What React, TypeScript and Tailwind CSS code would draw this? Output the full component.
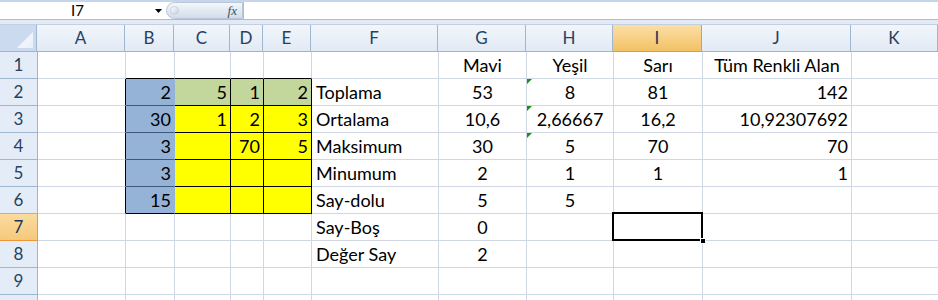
import React from "react";

type Align = "l" | "c" | "r";
type Cell = { t?: string; a?: Align; bg?: string; br?: string; bb?: string; tri?: boolean; sel?: boolean };

const COLS = ["A", "B", "C", "D", "E", "F", "G", "H", "I", "J", "K"];
const W = [88, 49, 56, 33, 48, 127, 88, 87, 89, 149, 87];

const GRID = "#d0d7e5";
const BLUE = "#95b3d7";
const GREEN = "#c3d69b";
const YEL = "#ffff00";
const BLK = "#000000";
const BLINE = "#3d5878";

function buildRows(): Cell[][] {
  const rows: Cell[][] = [];
  for (let r = 1; r <= 10; r++) {
    const row: Cell[] = [];
    for (let c = 0; c < 11; c++) row.push({});
    rows.push(row);
  }
  const set = (r: number, c: number, v: Partial<Cell>) => {
    rows[r - 1][c] = { ...rows[r - 1][c], ...v };
  };
  set(1, 6, { t: "Mavi", a: "c" });
  set(1, 7, { t: "Yeşil", a: "c" });
  set(1, 8, { t: "Sarı", a: "c" });
  set(1, 9, { t: "Tüm Renkli Alan", a: "c" });
  for (let c = 1; c <= 4; c++) set(1, c, { bb: BLK });
  for (let r = 2; r <= 6; r++) {
    set(r, 0, { br: BLK });
    set(r, 1, { bg: BLUE, br: BLUE, bb: r === 6 ? BLK : BLINE });
    for (let c = 2; c <= 4; c++) set(r, c, { bg: r === 2 ? GREEN : YEL, br: BLK, bb: BLK });
  }
  const B = ["2", "30", "3", "3", "15"];
  B.forEach((v, i) => set(i + 2, 1, { t: v, a: "r" }));
  set(2, 2, { t: "5", a: "r" });
  set(2, 3, { t: "1", a: "r" });
  set(2, 4, { t: "2", a: "r" });
  set(3, 2, { t: "1", a: "r" });
  set(3, 3, { t: "2", a: "r" });
  set(3, 4, { t: "3", a: "r" });
  set(4, 3, { t: "70", a: "r" });
  set(4, 4, { t: "5", a: "r" });
  const F = ["Toplama", "Ortalama", "Maksimum", "Minumum", "Say-dolu", "Say-Boş", "Değer Say"];
  F.forEach((v, i) => set(i + 2, 5, { t: v, a: "l" }));
  const G = ["53", "10,6", "30", "2", "5", "0", "2"];
  G.forEach((v, i) => set(i + 2, 6, { t: v, a: "c" }));
  const H = ["8", "2,66667", "5", "1", "5"];
  H.forEach((v, i) => set(i + 2, 7, { t: v, a: "c" }));
  const I = ["81", "16,2", "70", "1"];
  I.forEach((v, i) => set(i + 2, 8, { t: v, a: "c" }));
  const J = ["142", "10,92307692", "70", "1"];
  J.forEach((v, i) => set(i + 2, 9, { t: v, a: "r" }));
  set(2, 7, { tri: true });
  set(3, 7, { tri: true });
  set(4, 7, { tri: true });
  set(7, 8, { sel: true });
  return rows;
}

const FONT = { fontFamily: "Lato, 'Open Sans', sans-serif" };

export default function App() {
  const rows = buildRows();
  return (
    <div className="w-[938px] h-[300px] overflow-hidden bg-white" style={FONT}>
      {/* formula bar */}
      <div className="h-[2px] bg-[#c5d5ea]" />
      <div className="flex h-[18px] bg-white border-b border-[#a9bed6]">
        <div className="w-[166px] flex items-center relative">
          <span className="absolute left-[71px] top-[-1px] text-[15px] leading-[18px] text-black">I7</span>
          <svg className="absolute left-[155px] top-[7px]" width="7" height="4" viewBox="0 0 7 4">
            <polygon points="0,0 7,0 3.5,4" fill="#000" />
          </svg>
        </div>
        <div className="w-[77px] h-[17px] rounded-l-full bg-gradient-to-b from-[#f4f7fb] to-[#d2dce9] border border-[#b7c6d8] flex items-center relative">
          <div className="ml-[3px] w-[9px] h-[9px] rounded-full bg-gradient-to-br from-white to-[#c4cfdd] border border-[#c9d3e0]" />
          <span
            className="absolute right-[5px] top-[0px] text-[13px] leading-[15px] italic text-[#3f4d60]"
            style={{ fontFamily: "'Liberation Serif', serif" }}
          >
            fx
          </span>
        </div>
        <div className="flex-1 border-l border-[#a9bed6]" />
      </div>
      <div className="h-[5px] bg-[#e3eaf4] border-b border-[#c1cfe0]" />
      {/* column header */}
      <div className="flex h-[27px]">
        <div className="w-[38px] h-full bg-[#cbdaee] border-r border-b border-[#9eb6ce] relative overflow-hidden">
          <svg className="absolute right-[3px] bottom-[3px]" width="16" height="16" viewBox="0 0 16 16">
            <defs>
              <linearGradient id="tg" x1="0" y1="0" x2="1" y2="1">
                <stop offset="0" stopColor="#ffffff" />
                <stop offset="1" stopColor="#e7eef8" />
              </linearGradient>
            </defs>
            <polygon points="16,0 16,16 0,16" fill="url(#tg)" />
          </svg>
        </div>
        {COLS.map((c, i) => {
          const sel = c === "I";
          return (
            <div
              key={c}
              style={{ width: W[i] }}
              className={
                "h-full shrink-0 flex items-center justify-center text-[17px] border-r border-b " +
                (sel
                  ? "bg-gradient-to-b from-[#fbdfa5] to-[#f3c163] border-[#f29536] text-[#1d3557]"
                  : "bg-gradient-to-b from-[#f2f6fb] to-[#e1e9f4] border-[#9eb6ce] text-[#27415f]")
              }
            >
              {c}
            </div>
          );
        })}
      </div>
      {rows.map((row, ri) => {
        const rn = ri + 1;
        const selRow = rn === 7;
        return (
          <div key={rn} className="flex h-[27px]">
            <div
              className={
                "w-[38px] shrink-0 h-full flex items-center justify-center text-[17px] border-r border-b " +
                (selRow
                  ? "bg-gradient-to-b from-[#fbdba0] to-[#f5c97a] border-[#f29536] text-[#1d3557]"
                  : "bg-[#e4ecf7] border-[#9eb6ce] text-[#27415f]")
              }
            >
              {rn < 10 ? rn : ""}
            </div>
            {row.map((cell, ci) => (
              <div
                key={ci}
                style={{
                  width: W[ci],
                  backgroundColor: cell.bg ?? "#ffffff",
                  borderRightColor: cell.br ?? GRID,
                  borderBottomColor: cell.bb ?? GRID,
                }}
                className={
                  "relative shrink-0 h-full border-r border-b flex items-end pb-[2px] text-[18px] leading-[21px] text-black whitespace-nowrap " +
                  (cell.sel ? "z-10 " : "") +
                  (cell.a === "r" ? "justify-end pr-[3px]" : cell.a === "c" ? "justify-center" : "justify-start pl-[4px]")
                }
              >
                {cell.t}
                {cell.tri && (
                  <svg className="absolute left-0 top-0" width="5" height="5" viewBox="0 0 5 5">
                    <polygon points="0,0 5,0 0,5" fill="#1f8a1f" />
                  </svg>
                )}
                {cell.sel && (
                  <>
                    <div className="absolute left-[-2px] top-[-2px] right-[-1px] bottom-[-1px] border-2 border-black" />
                    <div className="absolute right-[-4px] bottom-[-4px] w-[6px] h-[6px] bg-black border border-white" />
                  </>
                )}
              </div>
            ))}
          </div>
        );
      })}
    </div>
  );
}
